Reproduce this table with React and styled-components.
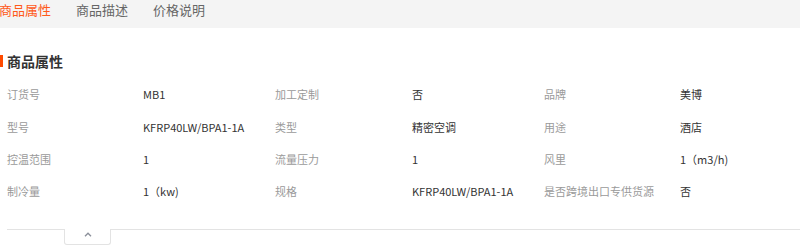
import React, { useState } from "react";
import styled, { createGlobalStyle } from "styled-components";

// 商品详情：页签 + 商品属性表
const GlobalStyle = createGlobalStyle`
  body {
    margin: 0;
    background: #fff;
    font-family: "Microsoft YaHei", "Noto Sans CJK SC", "Liberation Sans", sans-serif;
    overflow: hidden;
  }
`;

const TABS = ["商品属性", "商品描述", "价格说明"];

const ATTRS = [
  ["订货号", "MB1"], ["加工定制", "否"], ["品牌", "美博"],
  ["型号", "KFRP40LW/BPA1-1A"], ["类型", "精密空调"], ["用途", "酒店"],
  ["控温范围", "1"], ["流量压力", "1"], ["风里", "1（m3/h)"],
  ["制冷量", "1（kw)"], ["规格", "KFRP40LW/BPA1-1A"], ["是否跨境出口专供货源", "否"],
];

const App = () => {
  const [tab, setTab] = useState(0);
  const [open, setOpen] = useState(true);

  return (
    <Wrapper>
      <GlobalStyle />
      <TabBar>
        {TABS.map((name, i) => (
          <Tab key={name} active={tab === i} onClick={() => setTab(i)}>
            {name}
          </Tab>
        ))}
      </TabBar>

      <SectionTitle>商品属性</SectionTitle>

      {open && (
        <AttrGrid>
          {ATTRS.map(([label, value]) => (
            <React.Fragment key={label}>
              <Label>{label}</Label>
              <Value>{value}</Value>
            </React.Fragment>
          ))}
        </AttrGrid>
      )}

      <Footer>
        <Toggle onClick={() => setOpen(!open)}>
          <svg width="8" height="5" viewBox="0 0 8 5">
            <path d="M1 4.2 L4 1.2 L7 4.2" fill="none" stroke="#8a8f99" strokeWidth="1.3" />
          </svg>
        </Toggle>
      </Footer>
    </Wrapper>
  );
};

const Wrapper = styled.div`
  width: 800px;
  height: 249px;
  overflow: hidden;
`;

const TabBar = styled.div`
  display: flex;
  gap: 25px;
  height: 28px;
  margin-left: -1px;
  background-color: #f4f4f4;
`;

const Tab = styled.div`
  font-size: 13px;
  line-height: 20px;
  color: ${(props) => (props.active ? "#ff5a1a" : "#666")};
  cursor: pointer;
`;

const SectionTitle = styled.h3`
  display: flex;
  align-items: center;
  gap: 4px;
  margin: 23px 0 0;
  height: 20px;
  font-size: 14px;
  font-weight: bold;
  color: #333;

  &::before {
    content: "";
    width: 3px;
    height: 12px;
    background-color: #ff4a00;
  }
`;

const AttrGrid = styled.div`
  display: grid;
  grid-template-columns: 136px 132px 137px 132px 136px 1fr;
  grid-auto-rows: 32.4px;
  align-items: center;
  margin-top: 7px;
  padding-left: 7px;
  font-size: 11px;
`;

const Label = styled.div`
  color: #9a9a9a;
  white-space: nowrap;
`;

const Value = styled.div`
  color: #333;
  white-space: nowrap;
`;

const Footer = styled.div`
  margin: 21px 0 0 7px;
  border-top: 1px solid #e3e3e3;
`;

const Toggle = styled.div`
  display: flex;
  justify-content: center;
  align-items: flex-start;
  box-sizing: border-box;
  width: 47px;
  height: 16px;
  margin: -1px 0 0 57px;
  padding-top: 3px;
  background-color: #fff;
  border: 1px solid #e3e3e3;
  border-top: none;
  border-radius: 0 0 3px 3px;
  cursor: pointer;
`;

export default App;
